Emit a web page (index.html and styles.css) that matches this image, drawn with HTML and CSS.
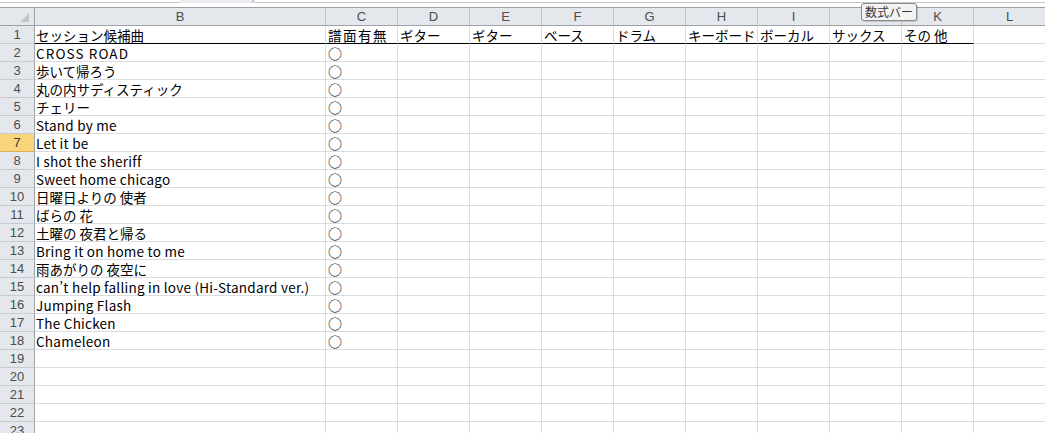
FILE: index.html
```html
<!DOCTYPE html>
<html lang="ja">
<head>
<meta charset="utf-8">
<title>Sheet</title>
<link rel="stylesheet" href="styles.css">
</head>
<body>
<div class="app">
  <div class="topbar">
    <div class="fx-left"></div>
    <div class="fx-tab"></div>
    <div class="fx-right"></div>
  </div>
  <div class="sheet">
    <div class="row colheads">
      <div class="corner"><span class="tri"></span></div>
      <div class="ch b">B</div>
      <div class="ch">C</div>
      <div class="ch">D</div>
      <div class="ch">E</div>
      <div class="ch">F</div>
      <div class="ch">G</div>
      <div class="ch">H</div>
      <div class="ch">I</div>
      <div class="ch">J</div>
      <div class="ch">K</div>
      <div class="ch">L</div>
    </div>
    <div class="row head">
      <div class="rh">1</div>
      <div class="c b u">セッション候補曲</div>
      <div class="c u wide">譜面有無</div>
      <div class="c u">ギター</div>
      <div class="c u">ギター</div>
      <div class="c u">ベース</div>
      <div class="c u">ドラム</div>
      <div class="c u">キーボード</div>
      <div class="c u">ボーカル</div>
      <div class="c u">サックス</div>
      <div class="c u">その 他</div>
      <div class="c"></div>
    </div>
    <div class="row"><div class="rh">2</div><div class="c b en caps">CROSS ROAD</div><div class="c mk">○</div><div class="c"></div><div class="c"></div><div class="c"></div><div class="c"></div><div class="c"></div><div class="c"></div><div class="c"></div><div class="c"></div><div class="c"></div></div>
    <div class="row"><div class="rh">3</div><div class="c b">歩いて帰ろう</div><div class="c mk">○</div><div class="c"></div><div class="c"></div><div class="c"></div><div class="c"></div><div class="c"></div><div class="c"></div><div class="c"></div><div class="c"></div><div class="c"></div></div>
    <div class="row"><div class="rh">4</div><div class="c b">丸の内サディスティック</div><div class="c mk">○</div><div class="c"></div><div class="c"></div><div class="c"></div><div class="c"></div><div class="c"></div><div class="c"></div><div class="c"></div><div class="c"></div><div class="c"></div></div>
    <div class="row"><div class="rh">5</div><div class="c b">チェリー</div><div class="c mk">○</div><div class="c"></div><div class="c"></div><div class="c"></div><div class="c"></div><div class="c"></div><div class="c"></div><div class="c"></div><div class="c"></div><div class="c"></div></div>
    <div class="row"><div class="rh">6</div><div class="c b en">Stand by me</div><div class="c mk">○</div><div class="c"></div><div class="c"></div><div class="c"></div><div class="c"></div><div class="c"></div><div class="c"></div><div class="c"></div><div class="c"></div><div class="c"></div></div>
    <div class="row"><div class="rh sel">7</div><div class="c b en">Let it be</div><div class="c mk">○</div><div class="c"></div><div class="c"></div><div class="c"></div><div class="c"></div><div class="c"></div><div class="c"></div><div class="c"></div><div class="c"></div><div class="c"></div></div>
    <div class="row"><div class="rh">8</div><div class="c b en">I shot the sheriff</div><div class="c mk">○</div><div class="c"></div><div class="c"></div><div class="c"></div><div class="c"></div><div class="c"></div><div class="c"></div><div class="c"></div><div class="c"></div><div class="c"></div></div>
    <div class="row"><div class="rh">9</div><div class="c b en">Sweet home chicago</div><div class="c mk">○</div><div class="c"></div><div class="c"></div><div class="c"></div><div class="c"></div><div class="c"></div><div class="c"></div><div class="c"></div><div class="c"></div><div class="c"></div></div>
    <div class="row"><div class="rh">10</div><div class="c b">日曜日よりの 使者</div><div class="c mk">○</div><div class="c"></div><div class="c"></div><div class="c"></div><div class="c"></div><div class="c"></div><div class="c"></div><div class="c"></div><div class="c"></div><div class="c"></div></div>
    <div class="row"><div class="rh">11</div><div class="c b">ばらの 花</div><div class="c mk">○</div><div class="c"></div><div class="c"></div><div class="c"></div><div class="c"></div><div class="c"></div><div class="c"></div><div class="c"></div><div class="c"></div><div class="c"></div></div>
    <div class="row"><div class="rh">12</div><div class="c b">土曜の 夜君と帰る</div><div class="c mk">○</div><div class="c"></div><div class="c"></div><div class="c"></div><div class="c"></div><div class="c"></div><div class="c"></div><div class="c"></div><div class="c"></div><div class="c"></div></div>
    <div class="row"><div class="rh">13</div><div class="c b en">Bring it on home to me</div><div class="c mk">○</div><div class="c"></div><div class="c"></div><div class="c"></div><div class="c"></div><div class="c"></div><div class="c"></div><div class="c"></div><div class="c"></div><div class="c"></div></div>
    <div class="row"><div class="rh">14</div><div class="c b">雨あがりの 夜空に</div><div class="c mk">○</div><div class="c"></div><div class="c"></div><div class="c"></div><div class="c"></div><div class="c"></div><div class="c"></div><div class="c"></div><div class="c"></div><div class="c"></div></div>
    <div class="row"><div class="rh">15</div><div class="c b en">can’t help falling in love (Hi-Standard ver.)</div><div class="c mk">○</div><div class="c"></div><div class="c"></div><div class="c"></div><div class="c"></div><div class="c"></div><div class="c"></div><div class="c"></div><div class="c"></div><div class="c"></div></div>
    <div class="row"><div class="rh">16</div><div class="c b en">Jumping Flash</div><div class="c mk">○</div><div class="c"></div><div class="c"></div><div class="c"></div><div class="c"></div><div class="c"></div><div class="c"></div><div class="c"></div><div class="c"></div><div class="c"></div></div>
    <div class="row"><div class="rh">17</div><div class="c b en">The Chicken</div><div class="c mk">○</div><div class="c"></div><div class="c"></div><div class="c"></div><div class="c"></div><div class="c"></div><div class="c"></div><div class="c"></div><div class="c"></div><div class="c"></div></div>
    <div class="row"><div class="rh">18</div><div class="c b en">Chameleon</div><div class="c mk">○</div><div class="c"></div><div class="c"></div><div class="c"></div><div class="c"></div><div class="c"></div><div class="c"></div><div class="c"></div><div class="c"></div><div class="c"></div></div>
    <div class="row"><div class="rh">19</div><div class="c b"></div><div class="c"></div><div class="c"></div><div class="c"></div><div class="c"></div><div class="c"></div><div class="c"></div><div class="c"></div><div class="c"></div><div class="c"></div><div class="c"></div></div>
    <div class="row"><div class="rh">20</div><div class="c b"></div><div class="c"></div><div class="c"></div><div class="c"></div><div class="c"></div><div class="c"></div><div class="c"></div><div class="c"></div><div class="c"></div><div class="c"></div><div class="c"></div></div>
    <div class="row"><div class="rh">21</div><div class="c b"></div><div class="c"></div><div class="c"></div><div class="c"></div><div class="c"></div><div class="c"></div><div class="c"></div><div class="c"></div><div class="c"></div><div class="c"></div><div class="c"></div></div>
    <div class="row"><div class="rh">22</div><div class="c b"></div><div class="c"></div><div class="c"></div><div class="c"></div><div class="c"></div><div class="c"></div><div class="c"></div><div class="c"></div><div class="c"></div><div class="c"></div><div class="c"></div></div>
    <div class="row"><div class="rh">23</div><div class="c b"></div><div class="c"></div><div class="c"></div><div class="c"></div><div class="c"></div><div class="c"></div><div class="c"></div><div class="c"></div><div class="c"></div><div class="c"></div><div class="c"></div></div>
  </div>
  <div class="tooltip">数式バー</div>
</div>
</body>
</html>
```
FILE: styles.css
```css
html, body {
  margin: 0;
  padding: 0;
  background: #ffffff;
  overflow: hidden;
}
.app {
  position: relative;
  width: 1045px;
  height: 433px;
  overflow: hidden;
  font-family: "Noto Sans CJK JP", "Noto Sans", sans-serif;
}
.topbar {
  height: 7px;
  display: flex;
  align-items: flex-start;
  border-bottom: 1px solid #9aa0a6;
  background: #ffffff;
}
.fx-left {
  width: 180px;
  height: 2px;
  border-bottom: 1px solid #c3c7cc;
}
.fx-tab {
  width: 73px;
  height: 3px;
  background: #e9ebee;
  border-right: 1px solid #8e949a;
  border-radius: 0 0 3px 3px;
}
.fx-right {
  flex: 1;
  height: 2px;
  border-bottom: 1px solid #c3c7cc;
}
.sheet {
  display: flex;
  flex-direction: column;
}
.row {
  display: flex;
  height: 18px;
  flex: none;
}
.row > div {
  box-sizing: border-box;
  height: 18px;
  flex: none;
}
.corner, .rh {
  width: 35px;
  background: #e4e7eb;
  border-right: 1px solid #9ea3a9;
  border-bottom: 1px solid #c7cbd0;
}
.corner {
  position: relative;
  border-bottom: 1px solid #9ea3a9;
}
.tri {
  position: absolute;
  right: 5px;
  bottom: 3px;
  width: 0;
  height: 0;
  border-left: 9px solid transparent;
  border-bottom: 9px solid #c3c7cd;
}
.ch {
  width: 72px;
  background: #e4e7eb;
  border-right: 1px solid #c3c7cc;
  border-bottom: 1px solid #9ea3a9;
  color: #4a4d52;
  font-size: 13px;
  line-height: 17px;
  text-align: center;
  font-family: "Liberation Sans", "Noto Sans CJK JP", sans-serif;
}
.ch.b {
  width: 291px;
}
.rh {
  color: #4a4d52;
  font-size: 13px;
  line-height: 18px;
  text-align: center;
  font-family: "Liberation Sans", sans-serif;
}
.rh.sel {
  background: #f8d57c;
  border-bottom-color: #e2b154;
  color: #3d3a30;
}
.c {
  width: 72px;
  border-right: 1px solid #dadcdd;
  border-bottom: 1px solid #dadcdd;
  font-size: 13.5px;
  line-height: 18px;
  padding-left: 2px;
  white-space: nowrap;
  color: #000000;
  overflow: visible;
}
.c.b {
  width: 291px;
  padding-left: 1px;
}
.c.en {
  letter-spacing: 0.25px;
}
.c.caps {
  letter-spacing: 1.1px;
}
.c.wide {
  letter-spacing: 1.5px;
}
.c.u {
  border-bottom: 1px solid #000000;
}
.c.mk {
  font-size: 14px;
  padding-left: 2px;
}
.tooltip {
  position: absolute;
  left: 861px;
  top: 3px;
  height: 18px;
  padding: 0 3px;
  box-sizing: border-box;
  background: #f3f3f3;
  border: 1px solid #8a8a8a;
  border-radius: 3px;
  font-size: 12px;
  line-height: 16px;
  color: #3a3a3a;
  box-shadow: 1px 1px 1px rgba(0,0,0,0.15);
}
```
